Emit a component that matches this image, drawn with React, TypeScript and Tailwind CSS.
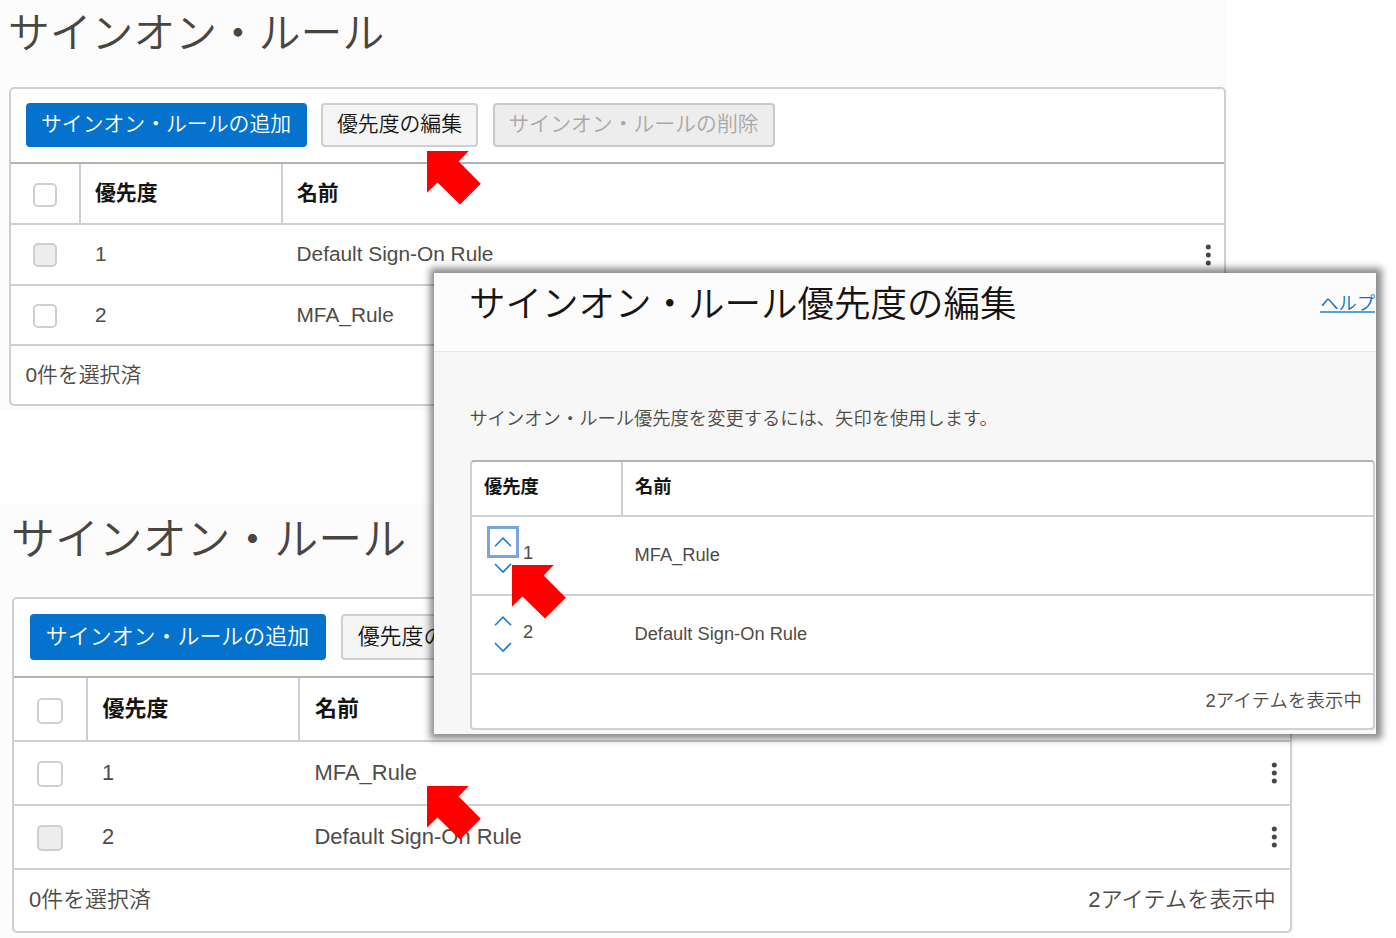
import type { ReactNode } from "react";

type Rule = { priority: number; name: string; locked: boolean; menu: boolean };

function Pointer({ className }: { className: string }) {
  return (
    <svg className={`absolute ${className}`} width="54" height="54" viewBox="0 0 54 54">
      <path d="M0 0H41.8L31.7 10.5L53.8 32.7L33 53.5L10.5 31.5L0 41.8Z" fill="#ff0000" />
    </svg>
  );
}

function Dots() {
  return (
    <svg width="8" height="22" viewBox="0 0 8 22" fill="#494541">
      <circle cx="4.3" cy="3" r="2.5" />
      <circle cx="4.3" cy="11" r="2.5" />
      <circle cx="4.3" cy="19" r="2.5" />
    </svg>
  );
}

function Check({ size, disabled = false }: { size: "small" | "large"; disabled?: boolean }) {
  return (
    <span
      className={`block rounded-[5px] border-2 border-[#cbd0d5] ${size === "small" ? "size-6" : "size-[26px]"} ${disabled ? "bg-[#ededed]" : "bg-white"}`}
    />
  );
}

function TopTable({ rules }: { rules: Rule[] }) {
  return (
    <section className="h-[410px] w-[1227px] bg-[#fcfcfc] pl-[9px] text-[20.85px] leading-6">
      <h1 className="-ml-px h-[87px] pt-[4px] text-[41.8px] font-[350] leading-[60px] text-[#494541]">サインオン・ルール</h1>
      <div className="flex h-[319px] w-[1217px] flex-col rounded-[5px] border-2 border-[#cbd0d5] bg-white">
        <div className="flex h-[75px] items-start gap-[14px] border-b-2 border-[#adb4bb] pl-[15px] pt-[14px]">
          <button className="h-[44px] w-[281px] rounded-[4px] bg-[#0572ce] pb-[2px] pr-px font-[350] text-white">サインオン・ルールの追加</button>
          <button className="h-[44px] w-[157px] rounded-[4px] border-2 border-[#cbd0d5] bg-[#f5f5f5] pb-[2px] font-[350] text-[#161513]">優先度の編集</button>
          <button className="ml-px h-[44px] w-[282px] rounded-[4px] border-2 border-[#c6cad0] bg-[#ededed] pb-[2px] pr-px font-[350] text-[#aaa8a6]">サインオン・ルールの削除</button>
        </div>
        <div className="grid h-[61px] grid-cols-[70px_202px_1fr] border-b-2 border-[#cbd0d5] font-bold text-[#161513]">
          <div className="flex items-center border-r-2 border-[#cbd0d5] pl-[22px] pt-[2px]"><Check size="small" /></div>
          <div className="flex items-center border-r-2 border-[#cbd0d5] pb-px pl-[14px]">優先度</div>
          <div className="flex items-center pb-px pl-[14px]">名前</div>
        </div>
        {rules.map((r) => (
          <div key={r.priority} className="grid h-[60.5px] grid-cols-[70px_202px_1fr_18px] border-b-2 border-[#cbd0d5] text-[#4f4b47]">
            <div className="flex items-center pl-[22px] pt-[2px]"><Check size="small" disabled={r.locked} /></div>
            <div className="flex items-center pl-[14px]">{r.priority}</div>
            <div className="flex items-center pl-[13.5px]">{r.name}</div>
            <div className="-ml-[2px] flex items-center pt-px">{r.menu && <Dots />}</div>
          </div>
        ))}
        <div className="flex flex-1 items-center pb-px pl-[14.5px] font-[350] text-[#4f4b47]">0件を選択済</div>
      </div>
    </section>
  );
}

function BottomTable({ rules }: { rules: Rule[] }) {
  return (
    <section className="h-[435px] w-[1295px] bg-[#fcfcfc] pl-[12px] text-[21.95px] leading-6">
      <h1 className="-ml-px h-[94px] pt-[7px] text-[43.9px] font-[350] leading-[60px] text-[#494541]">サインオン・ルール</h1>
      <div className="flex h-[336px] w-[1280px] flex-col rounded-[5px] border-2 border-[#cbd0d5] bg-white">
        <div className="flex h-[79px] items-start gap-[15px] border-b-2 border-[#adb4bb] pl-[16px] pt-[15px]">
          <button className="h-[46px] w-[296px] rounded-[4px] bg-[#0572ce] pb-px pr-px font-[350] text-white">サインオン・ルールの追加</button>
          <button className="h-[46px] w-[165px] rounded-[4px] border-2 border-[#cbd0d5] bg-[#f5f5f5] pb-px font-[350] text-[#161513]">優先度の編集</button>
        </div>
        <div className="grid h-[64px] grid-cols-[74px_212px_1fr] border-b-2 border-[#cbd0d5] font-bold text-[#161513]">
          <div className="flex items-center border-r-2 border-[#cbd0d5] pl-[23px] pt-[3px]"><Check size="large" /></div>
          <div className="flex items-center border-r-2 border-[#cbd0d5] pl-[14.5px]">優先度</div>
          <div className="flex items-center pl-[15px]">名前</div>
        </div>
        {rules.map((r) => (
          <div key={r.priority} className="grid h-[64px] grid-cols-[74px_212px_1fr_22px] border-b-2 border-[#cbd0d5] text-[#4f4b47]">
            <div className="flex items-center pl-[23px] pt-[2px]"><Check size="large" disabled={r.locked} /></div>
            <div className="flex items-center pl-[14px]">{r.priority}</div>
            <div className="flex items-center pl-[14.5px]">{r.name}</div>
            <div className="ml-[2px] flex items-center">{r.menu && <Dots />}</div>
          </div>
        ))}
        <div className="flex flex-1 items-center justify-between pb-px pl-[15px] pr-[14px] font-[350] text-[#4f4b47]">
          <span>0件を選択済</span>
          <span className="tracking-[0.25px]">2アイテムを表示中</span>
        </div>
      </div>
    </section>
  );
}

function Mover({ focused = false }: { focused?: boolean }) {
  return (
    <div className="flex flex-col items-center">
      <button className={`flex h-[32px] w-[32px] items-center justify-center ${focused ? "border-[3px] border-[#79a6e0]" : ""}`}>
        <svg className="shrink-0" width="18" height="11" viewBox="0 0 18 11" fill="none" stroke="#1a7dd3" strokeWidth="1.6"><path d="M1 9.2L9 1.2L17 9.2" /></svg>
      </button>
      <button className="flex h-[20px] w-[32px] items-center justify-center">
        <svg className="shrink-0" width="18" height="11" viewBox="0 0 18 11" fill="none" stroke="#1a7dd3" strokeWidth="1.6"><path d="M1 1L9 9L17 1" /></svg>
      </button>
    </div>
  );
}

function ModalRow({ priority, children, focused }: { priority: number; children: ReactNode; focused?: boolean }) {
  return (
    <div className="grid h-[79px] grid-cols-[151px_1fr] border-b-2 border-[#cbd0d5] text-[#4f4b47]">
      <div className="flex items-start pl-[15px] pt-[9px]">
        <Mover focused={focused} />
        <span className="pl-[4px] pt-[15px]">{priority}</span>
      </div>
      <div className="flex items-center pb-[2px] pl-[11.5px]">{children}</div>
    </div>
  );
}

function PriorityDialog() {
  return (
    <div className="absolute left-[434px] top-[273px] h-[461px] w-[942px] bg-[#f7f7f7] text-[18.3px] leading-6 shadow-[1px_0px_7px_5px_rgba(0,0,0,0.46)]">
      <header className="flex h-[79px] justify-between border-b border-[#e6e6e6] bg-[#fcfcfc] pl-[35px]">
        <h2 className="pt-px text-[36.5px] font-[350] leading-[62px] text-[#161513]">サインオン・ルール優先度の編集</h2>
        <a className="mr-px mt-[18px] h-[22px] border-b-2 border-[#5a9fdf] pt-px font-[350] text-[#0572ce]">ヘルプ</a>
      </header>
      <p className="h-[108px] pl-[35.5px] pt-[55px] font-[350] text-[#4f4b47]">サインオン・ルール優先度を変更するには、矢印を使用します。</p>
      <div className="ml-[36px] flex h-[270px] w-[905px] flex-col rounded-[4px] border-2 border-[#cbd0d5] border-t-[#adb4bb] bg-white">
        <div className="grid h-[55px] grid-cols-[151px_1fr] border-b-2 border-[#cbd0d5] font-bold text-[#161513]">
          <div className="flex items-center border-r-2 border-[#cbd0d5] pb-[3px] pl-[12px]">優先度</div>
          <div className="flex items-center pb-[3px] pl-[12px]">名前</div>
        </div>
        <ModalRow priority={1} focused>MFA_Rule</ModalRow>
        <ModalRow priority={2}>Default Sign-On Rule</ModalRow>
        <div className="flex flex-1 items-center justify-end pb-[2px] pr-[11px] font-[350] tracking-[0.2px] text-[#4f4b47]">2アイテムを表示中</div>
      </div>
    </div>
  );
}

export default function App() {
  return (
    <main className="relative flex h-[938px] w-[1396px] flex-col justify-between overflow-hidden whitespace-nowrap bg-white font-['Liberation_Sans','Noto_Sans_CJK_JP',sans-serif]">
      <TopTable
        rules={[
          { priority: 1, name: "Default Sign-On Rule", locked: true, menu: true },
          { priority: 2, name: "MFA_Rule", locked: false, menu: false },
        ]}
      />
      <BottomTable
        rules={[
          { priority: 1, name: "MFA_Rule", locked: false, menu: true },
          { priority: 2, name: "Default Sign-On Rule", locked: true, menu: true },
        ]}
      />
      <PriorityDialog />
      <Pointer className="left-[427px] top-[151px]" />
      <Pointer className="left-[512px] top-[565px]" />
      <Pointer className="left-[427px] top-[786px]" />
    </main>
  );
}
